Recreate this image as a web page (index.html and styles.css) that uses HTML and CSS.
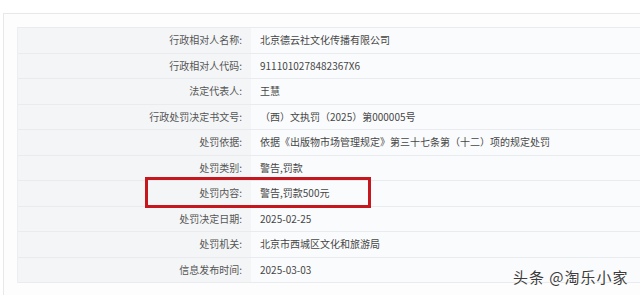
FILE: index.html
```html
<!DOCTYPE html>
<html lang="zh">
<head>
<meta charset="utf-8">
<link rel="stylesheet" href="styles.css">
</head>
<body>
<div class="page">
  <div class="card">
    <div class="table">
      <div class="row"><div class="label">行政相对人名称:</div><div class="value">北京德云社文化传播有限公司</div></div>
      <div class="row"><div class="label">行政相对人代码:</div><div class="value">9111010278482367X6</div></div>
      <div class="row"><div class="label">法定代表人:</div><div class="value">王慧</div></div>
      <div class="row"><div class="label">行政处罚决定书文号:</div><div class="value">（西）文执罚（2025）第000005号</div></div>
      <div class="row"><div class="label">处罚依据:</div><div class="value">依据《出版物市场管理规定》第三十七条第（十二）项的规定处罚</div></div>
      <div class="row"><div class="label">处罚类别:</div><div class="value">警告,罚款</div></div>
      <div class="row"><div class="label">处罚内容:</div><div class="value">警告,罚款500元</div></div>
      <div class="row"><div class="label">处罚决定日期:</div><div class="value">2025-02-25</div></div>
      <div class="row"><div class="label">处罚机关:</div><div class="value">北京市西城区文化和旅游局</div></div>
      <div class="row"><div class="label">信息发布时间:</div><div class="value">2025-03-03</div></div>
    </div>
  </div>
  <div class="highlight"></div>
  <div class="watermark">头条 @淘乐小家</div>
</div>
</body>
</html>
```

FILE: styles.css
```css
html, body {
  margin: 0;
  padding: 0;
  background: #ffffff;
  overflow: hidden;
}
.page {
  position: relative;
  width: 640px;
  height: 295px;
  padding: 13px 0 0 3px;
  box-sizing: border-box;
  overflow: hidden;
  font-family: "Noto Sans CJK SC", "Noto Sans", sans-serif;
  font-size: 10px;
  color: #4a4a4a;
}
.card {
  border: 1px solid #e6e8eb;
  border-right: none;
  border-bottom: none;
  padding: 13px 0 0 13px;
  height: 268px;
  background: #fdfdfe;
  overflow: hidden;
}
.table {
  width: 640px;
  border-top: 1px solid #e9ebee;
  border-left: 1px solid #eceef1;
}
.row {
  display: grid;
  grid-template-columns: 233px 1fr;
  height: 25.5px;
  border-bottom: 1px solid #e9ebee;
  box-sizing: border-box;
}
.label {
  background: #f4f5f7;
  text-align: right;
  padding-right: 9px;
  line-height: 24.5px;
  color: #555;
}
.value {
  background: #fafbfc;
  padding-left: 9px;
  line-height: 24.5px;
  color: #464646;
}
.highlight {
  position: absolute;
  left: 145px;
  top: 177px;
  width: 226px;
  height: 31px;
  border: 3px solid #c6161e;
  box-sizing: border-box;
}
.watermark {
  position: absolute;
  left: 513px;
  top: 266px;
  font-size: 15px;
  color: #3c3c3c;
  text-shadow: 0 0 2px #fff, 0 0 2px #fff;
  letter-spacing: 1px;
}
```
